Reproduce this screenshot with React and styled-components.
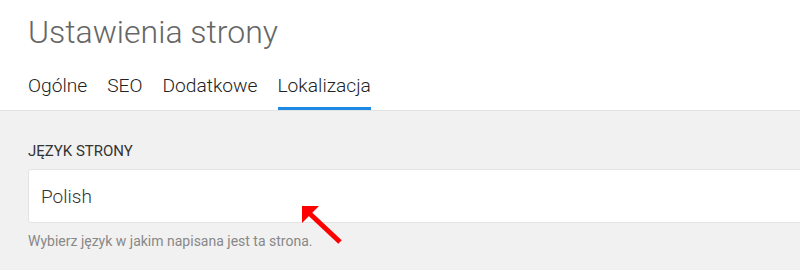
import React from 'react';
import styled, { createGlobalStyle } from 'styled-components';

const GlobalStyle = createGlobalStyle`
  html, body {
    margin: 0;
    padding: 0;
    background: #f1f1f1;
    overflow: hidden;
  }
  body {
    font-family: Roboto, "Liberation Sans", sans-serif;
  }
`;

const Page = styled.div`
  position: relative;
  width: 800px;
  height: 270px;
  overflow: hidden;
  background: #f1f1f1;
`;

const Header = styled.header`
  background: #fff;
  border-bottom: 1px solid #e2e2e2;
  padding: 12px 0 0 28px;
`;

const Title = styled.h1`
  margin: 0;
  font-size: 32px;
  font-weight: 300;
  line-height: 40px;
  color: #666;
`;

const Tabs = styled.nav`
  display: flex;
  gap: 20px;
  margin-top: 22px;
`;

const Tab = styled.div`
  font-size: 19.2px;
  font-weight: 300;
  line-height: 24px;
  color: #222;
  padding-bottom: 9px;
  border-bottom: 3px solid ${p => (p.$active ? '#1e88e5' : 'transparent')};
`;

const Body = styled.section`
  padding: 31px 0 0 28px;
`;

const Label = styled.label`
  display: block;
  font-size: 15px;
  line-height: 18px;
  color: #333;
  text-transform: uppercase;
  margin-bottom: 9px;
`;

const Input = styled.div`
  box-sizing: border-box;
  width: 800px;
  height: 54px;
  background: #fff;
  border: 1px solid #e3e3e3;
  border-radius: 3px;
  padding: 0 12px;
  display: flex;
  align-items: center;
  font-size: 19px;
  font-weight: 300;
  color: #333;
`;

const Help = styled.p`
  margin: 9px 0 0;
  font-size: 14px;
  line-height: 18px;
  color: #888;
`;

const Arrow = styled.svg`
  position: absolute;
  left: 296px;
  top: 200px;
`;

const tabs = ['Ogólne', 'SEO', 'Dodatkowe', 'Lokalizacja'];

export default function App() {
  return (
    <Page>
      <GlobalStyle />
      <Header>
        <Title>Ustawienia strony</Title>
        <Tabs>
          {tabs.map(t => (
            <Tab key={t} $active={t === 'Lokalizacja'}>{t}</Tab>
          ))}
        </Tabs>
      </Header>
      <Body>
        <Label>Język strony</Label>
        <Input>Polish</Input>
        <Help>Wybierz język w jakim napisana jest ta strona.</Help>
      </Body>
      <Arrow width="52" height="50" viewBox="0 0 52 50">
        <line x1="12" y1="12" x2="44" y2="42" stroke="#ff0000" strokeWidth="5" />
        <polygon points="6,6 23,6 6,23" fill="#ff0000" />
      </Arrow>
    </Page>
  );
}
